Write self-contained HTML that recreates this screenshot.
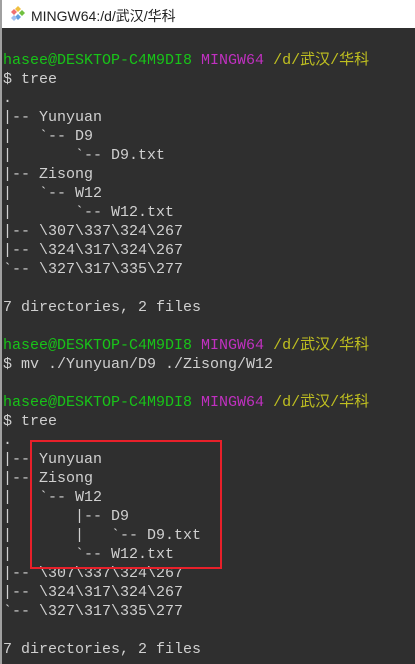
<!DOCTYPE html>
<html><head><meta charset="utf-8"><style>
body{margin:0;width:415px;height:664px;overflow:hidden;background:#2f2f2f;position:relative}
#title{position:absolute;left:0;top:0;width:415px;height:28px;background:#fff;}
#title span{position:absolute;left:31px;top:6px;font:14px "Liberation Sans","Noto Sans CJK SC",sans-serif;color:#222}
#lb{position:absolute;left:0;top:0;width:2px;height:664px;background:#a0a0a0}
pre{position:absolute;left:3px;top:51px;margin:0;font:15px/19px "Liberation Mono","Noto Sans CJK SC",monospace;color:#d0d0d0;letter-spacing:0}
.g{color:#18c418}.m{color:#c030c0}.y{color:#c0c020}
#box{position:absolute;left:30px;top:440px;width:188px;height:125px;border:2px solid #e8202a}
</style></head><body>
<div id="title"><svg style="position:absolute;left:9px;top:6px" width="18" height="16" viewBox="0 0 18 16"><polygon points="5,3 8,6 5,9 2,6" fill="#f07070"/><polygon points="9,0 12,3 9,6 6,3" fill="#f0c040"/><polygon points="13,4 16,7 13,10 10,7" fill="#70c040"/><polygon points="9,8 12,11 9,14 6,11" fill="#60a0e0"/><polygon points="5,9 8,12 5,15 2,12" fill="#a0c0f0"/></svg><span>MINGW64:/d/武汉/华科</span></div>
<div id="lb"></div>
<pre><span class="g">hasee@DESKTOP-C4M9DI8</span> <span class="m">MINGW64</span> <span class="y">/d/武汉/华科</span>
$ tree
.
|-- Yunyuan
|   `-- D9
|       `-- D9.txt
|-- Zisong
|   `-- W12
|       `-- W12.txt
|-- \307\337\324\267
|-- \324\317\324\267
`-- \327\317\335\277

7 directories, 2 files

<span class="g">hasee@DESKTOP-C4M9DI8</span> <span class="m">MINGW64</span> <span class="y">/d/武汉/华科</span>
$ mv ./Yunyuan/D9 ./Zisong/W12

<span class="g">hasee@DESKTOP-C4M9DI8</span> <span class="m">MINGW64</span> <span class="y">/d/武汉/华科</span>
$ tree
.
|-- Yunyuan
|-- Zisong
|   `-- W12
|       |-- D9
|       |   `-- D9.txt
|       `-- W12.txt
|-- \307\337\324\267
|-- \324\317\324\267
`-- \327\317\335\277

7 directories, 2 files</pre>
<div id="box"></div>
</body></html>
